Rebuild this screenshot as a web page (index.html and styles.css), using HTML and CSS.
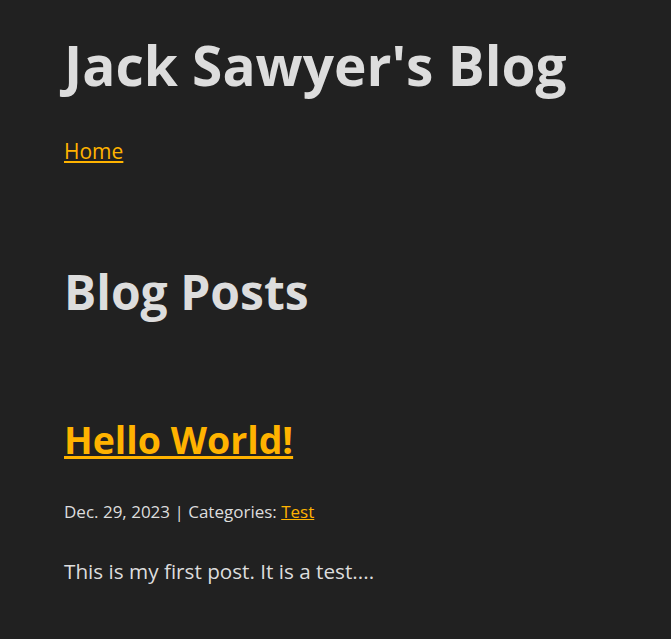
FILE: index.html
```html
<!DOCTYPE html>
<html lang="en">
<head>
<meta charset="utf-8">
<title>Jack Sawyer's Blog</title>
<link rel="stylesheet" href="styles.css">
</head>
<body>
<div class="page">
  <header class="site-header">
    <h1 class="site-title">Jack Sawyer's Blog</h1>
    <nav class="site-nav"><a href="#">Home</a></nav>
  </header>
  <main>
    <h2 class="section-title">Blog Posts</h2>
    <article class="post">
      <h3 class="post-title"><a href="#">Hello World!</a></h3>
      <p class="post-meta">Dec. 29, 2023 | Categories: <a href="#">Test</a></p>
      <p class="post-excerpt">This is my first post. It is a test....</p>
    </article>
  </main>
</div>
</body>
</html>
```
FILE: styles.css
```css
html, body {
  margin: 0;
  padding: 0;
  background: #212121;
}
body {
  color: #dddddd;
  font-family: "Open Sans", "Noto Sans", sans-serif;
}
.page {
  padding: 30px 64px 0 64px;
}
a {
  color: #ffb300;
}
.site-title {
  margin: 0;
  font-size: 55px;
  line-height: 70px;
  font-weight: 700;
}
.site-nav {
  margin-top: 37px;
  font-size: 21px;
  line-height: 28px;
}
.section-title {
  margin: 97px 0 0 0;
  font-size: 48px;
  line-height: 60px;
  font-weight: 700;
}
.post-title {
  margin: 96px 0 0 0;
  font-size: 37.5px;
  line-height: 44px;
  font-weight: 700;
}
.post-meta {
  margin: 38px 0 0 0;
  font-size: 17px;
  line-height: 24px;
}
.post-excerpt {
  margin: 32px 0 0 0;
  font-size: 20.7px;
  line-height: 30px;
}
```
